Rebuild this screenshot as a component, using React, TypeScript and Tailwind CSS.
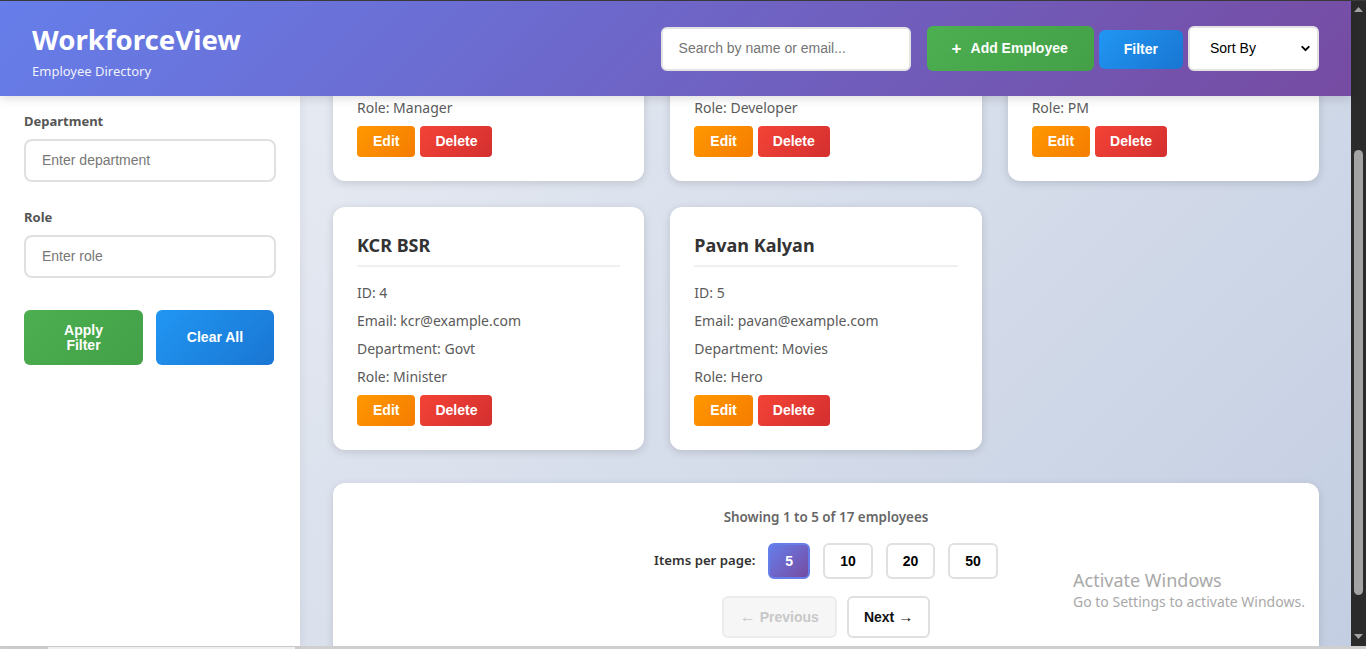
import { useLayoutEffect, useRef } from "react";
import { ChevronDown } from "lucide-react";

const employees = [
  { id: 1, name: "Ravi Teja", email: "ravi@example.com", department: "Sales", role: "Manager" },
  { id: 2, name: "Sita Rao", email: "sita@example.com", department: "IT", role: "Developer" },
  { id: 3, name: "Arjun Reddy", email: "arjun@example.com", department: "Product", role: "PM" },
  { id: 4, name: "KCR BSR", email: "kcr@example.com", department: "Govt", role: "Minister" },
  { id: 5, name: "Pavan Kalyan", email: "pavan@example.com", department: "Movies", role: "Hero" },
];

const ui = "font-['Noto_Sans',sans-serif]";
const btn = "font-['Liberation_Sans',Arial,sans-serif] font-bold text-white";

function EmployeeCard({ emp }: { emp: (typeof employees)[0] }) {
  return (
    <div className="rounded-xl bg-white px-6 pt-[25px] pb-6 shadow-[0_2px_8px_rgba(0,0,0,0.14)]">
      <h3 className="border-b-2 border-[#f0f0f0] pb-[6px] text-[18px] font-bold leading-[27px] text-[#333]">
        {emp.name}
      </h3>
      <div className="mt-4 text-[14px] leading-[20px] text-[#5a5a5a]">
        <p className="mb-2">ID: {emp.id}</p>
        <p className="mb-2">Email: {emp.email}</p>
        <p className="mb-2">Department: {emp.department}</p>
        <p className="mb-2">Role: {emp.role}</p>
      </div>
      <div className="flex gap-[5px]">
        <button className={`${btn} h-[31px] rounded bg-[linear-gradient(135deg,#ff9800,#f57c00)] px-4 text-[14px]`}>
          Edit
        </button>
        <button className={`${btn} h-[31px] rounded bg-[linear-gradient(135deg,#f44336,#d32f2f)] px-[15px] text-[14px]`}>
          Delete
        </button>
      </div>
    </div>
  );
}

function Header() {
  return (
    <header className="relative z-20 flex h-[95px] shrink-0 items-center justify-between bg-[linear-gradient(135deg,#667eea_0%,#764ba2_100%)] px-8 shadow-[0_2px_10px_rgba(0,0,0,0.15)]">
      <div className="pt-[5px] text-white">
        <h1 className="text-[27.6px] font-bold leading-[34px]">WorkforceView</h1>
        <p className="mt-[6px] text-[13px] leading-[18px] opacity-90">Employee Directory</p>
      </div>
      <div className="flex items-center">
        <div className="flex h-[44px] w-[250px] items-center rounded-md border-2 border-[#e3e3e3] bg-white px-4 font-['Liberation_Sans',Arial,sans-serif] text-[14px] text-[#757575]">
          Search by name or email...
        </div>
        <button className={`${btn} ml-[16px] flex h-[45px] items-center rounded-md bg-[linear-gradient(135deg,#4caf50,#43a047)] pl-[25px] pr-[26px] text-[14px]`}>
          <span className="mr-[9px] text-[17px] leading-none">+</span>
          Add Employee
        </button>
        <button className={`${btn} ml-[5px] mt-px h-[39px] rounded-md bg-[linear-gradient(135deg,#2196f3,#1976d2)] px-[25px] text-[14px]`}>
          Filter
        </button>
        <div className="ml-[5px] flex h-[45px] w-[131px] items-center justify-between rounded-md border-2 border-[#e3e3e3] bg-white pl-5 pr-[5px] font-['Liberation_Sans',Arial,sans-serif] text-[14px] text-black">
          Sort By
          <ChevronDown size={13} strokeWidth={3.5} />
        </div>
      </div>
    </header>
  );
}

function Sidebar() {
  const field = "flex h-[43px] items-center rounded-lg border-2 border-[#e0e0e0] bg-white px-4 font-['Liberation_Sans',Arial,sans-serif] text-[14px] text-[#777]";
  return (
    <aside className="relative z-10 w-[300px] shrink-0 bg-white px-6 pt-[16px] shadow-[2px_0_8px_rgba(0,0,0,0.06)]">
      <label className="block text-[13px] font-bold leading-[19px] text-[#555]">Department</label>
      <div className={`${field} mt-2`}>Enter department</div>
      <label className="mt-[26px] block text-[13px] font-bold leading-[19px] text-[#555]">Role</label>
      <div className={`${field} mt-2`}>Enter role</div>
      <div className="mt-[32px] flex gap-[13px]">
        <button className={`${btn} h-[55px] w-[119px] rounded-md bg-[linear-gradient(135deg,#4caf50,#43a047)] px-10 text-[14px] leading-[15px]`}>
          Apply Filter
        </button>
        <button className={`${btn} h-[55px] w-[118px] rounded-md bg-[linear-gradient(135deg,#2196f3,#1976d2)] text-[14px]`}>
          Clear All
        </button>
      </div>
    </aside>
  );
}

function Pagination() {
  const sizes = [5, 10, 20, 50];
  return (
    <div className="mt-[33px] rounded-xl bg-white p-6 text-center shadow-[0_2px_8px_rgba(0,0,0,0.12)]">
      <p className="text-[13.4px] font-semibold leading-[21px] text-[#666]">Showing 1 to 5 of 17 employees</p>
      <div className="mt-[15px] flex items-center justify-center gap-[13px]">
        <span className="text-[13.2px] font-semibold text-[#333]">Items per page:</span>
        {sizes.map((s) =>
          s === 5 ? (
            <button
              key={s}
              className={`${btn} rounded-md border-2 border-[#667eea] bg-[linear-gradient(135deg,#667eea,#764ba2)] px-[15px] py-2 text-[14px] leading-4`}
            >
              {s}
            </button>
          ) : (
            <button
              key={s}
              className="rounded-md border-2 border-[#e0e0e0] bg-white px-[15px] py-2 font-['Liberation_Sans',Arial,sans-serif] text-[14px] font-bold leading-4 text-black"
            >
              {s}
            </button>
          )
        )}
      </div>
      <div className="mt-[17px] flex justify-center gap-[10px]">
        <button className="h-[42px] rounded-md border-2 border-[#ececec] bg-[#f6f6f6] px-4 font-['Liberation_Sans',Arial,sans-serif] text-[14px] font-bold text-[#c8c8c8]">
          <span className="text-[16px]">←</span> Previous
        </button>
        <button className="h-[42px] rounded-md border-2 border-[#e0e0e0] bg-white px-[15px] font-['Liberation_Sans',Arial,sans-serif] text-[14px] font-bold text-[#111]">
          Next <span className="text-[15px]">→</span>
        </button>
      </div>
    </div>
  );
}

function Scrollbar() {
  return (
    <div className="flex w-[15px] shrink-0 flex-col items-center bg-[#2b2b2b]">
      <svg width="9" height="6" viewBox="0 0 9 6" className="mt-[6px]">
        <path d="M4.5 0 9 5H0z" fill="#a3a3a3" />
      </svg>
      <div className="mt-[137px] h-[445px] w-[9px] rounded-full bg-[#a3a3a3]" />
      <svg width="9" height="6" viewBox="0 0 9 6" className="mt-auto mb-[6px]">
        <path d="M0 0h9L4.5 5z" fill="#a3a3a3" />
      </svg>
    </div>
  );
}

export default function App() {
  const mainRef = useRef<HTMLDivElement>(null);

  // page is shown scrolled down past the first row of cards
  useLayoutEffect(() => {
    if (mainRef.current) mainRef.current.scrollTop = 190;
  }, []);

  return (
    <div className={`${ui} relative flex h-[649px] flex-col overflow-hidden bg-white`}>
      <div className="h-px shrink-0 bg-[#3c3c3c]" />
      <div className="flex min-h-0 flex-1">
        <div className="flex min-w-0 flex-1 flex-col">
          <Header />
          <div className="flex min-h-0 flex-1">
            <Sidebar />
            <main
              ref={mainRef}
              className="min-w-0 flex-1 overflow-hidden bg-[linear-gradient(135deg,#e6eaf2_0%,#c3cee2_100%)]"
            >
              <div className="py-8 pl-[33px] pr-8">
                <div className="grid grid-cols-3 gap-x-[26px] gap-y-[26px]">
                  {employees.map((emp) => (
                    <EmployeeCard key={emp.id} emp={emp} />
                  ))}
                </div>
                <Pagination />
              </div>
            </main>
          </div>
        </div>
        <Scrollbar />
      </div>
      <div className="flex h-[3px] shrink-0 bg-[#cfcfcf]">
        <div className="ml-[48px] mt-px h-[2px] w-[247px] bg-[#f4f4f4]" />
      </div>

      {/* Windows activation watermark */}
      <div className="pointer-events-none absolute left-[1073px] top-[568px] text-[#a9a9a9]">
        <p className="text-[18px] leading-[24px]">Activate Windows</p>
        <p className="text-[14px] leading-[20px]">Go to Settings to activate Windows.</p>
      </div>
    </div>
  );
}
